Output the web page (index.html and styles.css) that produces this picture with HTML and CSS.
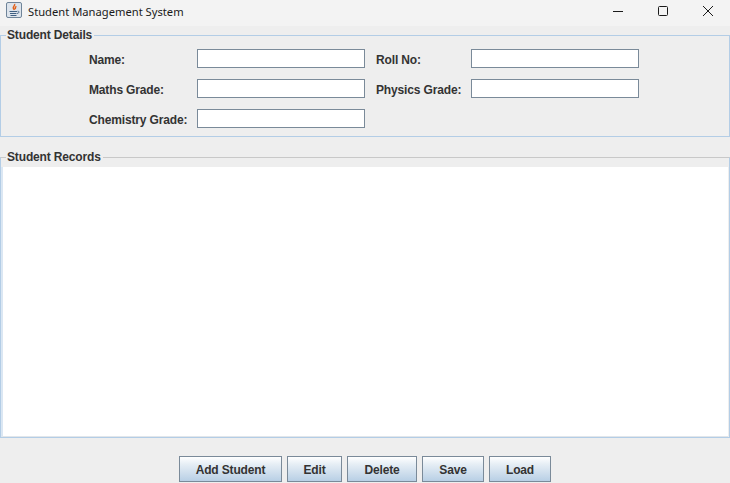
FILE: index.html
```html
<!DOCTYPE html>
<html lang="en">
<head>
    <meta charset="UTF-8">
    <meta name="viewport" content="width=device-width, initial-scale=1.0">
    <title>Student Management System</title>
    <link rel="stylesheet" href="styles.css">
</head>
<body>
    <div class="titlebar">
        <svg class="app-icon" width="16" height="16" viewBox="0 0 16 16">
            <rect x="0.5" y="0.5" width="15" height="15" rx="1.5" fill="#dde4ec" stroke="#6f8499"/>
            <path d="M8.5 2c1 1.7-2 2.5-1.1 4.3.3.6.8 1 1.1 1.5M10.3 4.3c-1 .9-1.5 1.5-.9 2.9" fill="none" stroke="#e2601a" stroke-width="1.5"/>
            <path d="M3.5 9.5h7.5M4 11.5h6.5M4.5 13.5h6" stroke="#3f5f82" stroke-width="1"/>
            <path d="M11.5 9.2c2-.3 2.2 1.9-.5 2.3" fill="none" stroke="#3f5f82" stroke-width="0.9"/>
        </svg>
        <span class="app-title">Student Management System</span>
        <div class="win-controls">
            <svg class="win-btn" width="45" height="20" viewBox="0 0 45 20"><path d="M18 10.5h10" stroke="#1a1a1a"/></svg>
            <svg class="win-btn" width="45" height="20" viewBox="0 0 45 20"><rect x="18.5" y="5.5" width="9" height="9" rx="1" fill="none" stroke="#1a1a1a"/></svg>
            <svg class="win-btn" width="45" height="20" viewBox="0 0 45 20"><path d="M18 5l10 10M28 5l-10 10" stroke="#1a1a1a"/></svg>
        </div>
    </div>

    <fieldset class="group details">
        <legend>Student Details</legend>
        <div class="form-grid">
            <label for="name">Name:</label>
            <input type="text" id="name">
            <label for="roll">Roll No:</label>
            <input type="text" id="roll">
            <label for="maths">Maths Grade:</label>
            <input type="text" id="maths">
            <label for="physics">Physics Grade:</label>
            <input type="text" id="physics">
            <label for="chemistry">Chemistry Grade:</label>
            <input type="text" id="chemistry">
        </div>
    </fieldset>

    <fieldset class="group records">
        <legend>Student Records</legend>
        <div class="records-area"></div>
    </fieldset>

    <div class="actions">
        <button type="button" class="add">Add Student</button>
        <button type="button" class="edit">Edit</button>
        <button type="button" class="delete">Delete</button>
        <button type="button" class="save">Save</button>
        <button type="button" class="load">Load</button>
    </div>
</body>
</html>
```

FILE: styles.css
```css
html, body {
    height: 483px;
    overflow: hidden;
}

body {
    margin: 0;
    background-color: #eeeeee;
    color: #333333;
    font-family: "Liberation Sans", Arial, sans-serif;
    font-size: 12px;
    font-weight: bold;
}

.titlebar {
    display: flex;
    align-items: center;
    height: 26px;
    padding-left: 6px;
    background-color: #f3f3f3;
}

.app-icon {
    margin-top: -6px;
    margin-right: 6px;
}

.app-title {
    margin-top: -4px;
    font-family: "Noto Sans", "Open Sans", sans-serif;
    font-size: 11.2px;
    font-weight: normal;
    color: #1a1a1a;
}

.win-controls {
    display: flex;
    margin-left: auto;
    margin-top: -5px;
}

.group {
    margin: 0;
    padding: 0;
    border: 1px solid #b3cde6;
    min-width: 0;
}

.group legend {
    margin-left: 5px;
    padding: 0 2px 0 1px;
    line-height: 14px;
    letter-spacing: -0.15px;
}

.details {
    height: 107px;
    margin-top: 2px;
}

.form-grid {
    display: grid;
    grid-template-columns: 108px 168px 106px 168px;
    grid-auto-rows: 19px;
    row-gap: 11px;
    padding: 7px 0 0 88px;
    align-items: center;
}

label {
    padding-top: 2px;
    letter-spacing: -0.15px;
    white-space: nowrap;
}

.form-grid label:nth-of-type(even) {
    margin-left: 11px;
}

input {
    box-sizing: border-box;
    width: 168px;
    height: 19px;
    margin: 0;
    padding: 0 2px;
    border: 1px solid #7a8a99;
    border-radius: 0;
    background-color: #ffffff;
}

.records {
    height: 286px;
    margin-top: 13px;
    border-top-color: #c8c8c8;
}

.records-area {
    box-sizing: border-box;
    height: 270px;
    margin: 3px 1px 0 0;
    border-left: 2px solid #dbe7f3;
    border-bottom: 1px solid #e2e6ea;
    background-color: #ffffff;
}

.actions {
    display: flex;
    justify-content: center;
    gap: 5px;
    margin-top: 18px;
}

button {
    box-sizing: border-box;
    height: 26px;
    margin: 0;
    padding: 2px 0 0;
    border: 1px solid #7a8a99;
    border-radius: 0;
    background: linear-gradient(#ffffff, #e6eef5 30%, #b8cfe5);
    color: #333333;
    font-family: inherit;
    font-size: 12px;
    font-weight: bold;
    letter-spacing: -0.15px;
}

.add { width: 103px; }
.edit { width: 55px; }
.delete { width: 70px; }
.save { width: 62px; }
.load { width: 62px; }
```
